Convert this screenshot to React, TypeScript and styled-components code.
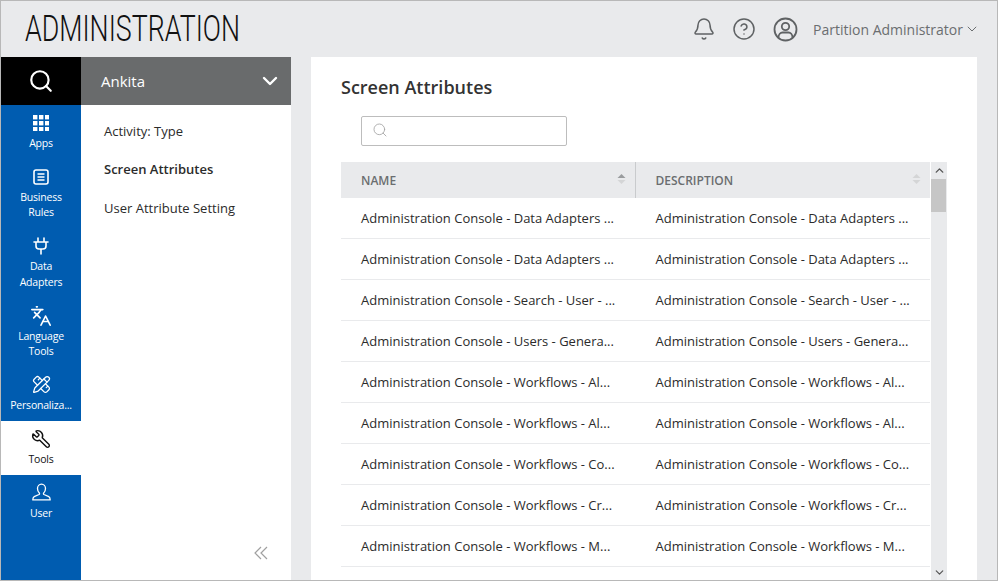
import React from "react";
import styled, { createGlobalStyle } from "styled-components";
import { Bell, ChevronDown, ChevronUp, CircleHelp, Languages, PencilRuler, Search, Wrench } from "lucide-react";

const Global = createGlobalStyle`
  html, body { margin: 0; padding: 0; height: 100%; overflow: hidden; }
  body { font-family: "Open Sans", "Liberation Sans", sans-serif; color: #2b2b2b; }
  #root { height: 100%; }
  * { box-sizing: border-box; }
`;

const Frame = styled.div`
  width: 998px; height: 581px; background: #e9eaec; border: 1px solid #b8b8b8;
  display: flex; flex-direction: column; overflow: hidden;
`;
const Header = styled.header`
  height: 56px; flex: none; display: flex; align-items: center; justify-content: space-between;
  padding: 0 20px 0 24px;
`;
const Title = styled.h1`
  margin: 0; font: 300 36px/56px Roboto, "Liberation Sans", sans-serif; color: #111; width: 214px;
  transform: scaleX(0.744); transform-origin: left center; white-space: nowrap;
`;
const HeaderTools = styled.div`
  display: flex; align-items: center; color: #5f6264; height: 56px;
`;
const ToolIcon = styled.span<{ $gap: number }>`
  display: flex; margin-right: ${p => p.$gap}px;
`;
const UserMenu = styled.div`
  display: flex; align-items: center; gap: 4px; font-size: 14px; color: #6b6e70;
`;
const Body = styled.div`
  flex: 1; display: flex; min-height: 0;
`;
const Rail = styled.nav`
  width: 80px; flex: none; background: #005cb0; display: flex; flex-direction: column;
`;
const RailSearch = styled.div`
  height: 48px; flex: none; background: #000; color: #fff; display: flex; align-items: center; justify-content: center;
`;
const RailItem = styled.div<{ $active?: boolean }>`
  display: flex; flex-direction: column; align-items: center; padding: 8px 4px 7.67px;
  background: ${p => (p.$active ? "#fff" : "transparent")};
  color: ${p => (p.$active ? "#111" : "#fff")};
`;
const RailIcon = styled.span`
  height: 20px; width: 24px; display: flex; align-items: center; justify-content: center; margin-bottom: 3px;
`;
const RailLabel = styled.span`
  font-size: 10.5px; line-height: 15.33px; text-align: center; letter-spacing: -0.2px; white-space: pre-line;
`;
const MirroredWrench = styled(Wrench)`
  transform: scaleX(-1);
`;
const SubPanel = styled.aside`
  width: 210px; flex: none; background: #fff; display: flex; flex-direction: column;
`;
const SubHeader = styled.div`
  height: 48px; flex: none; background: #696b6c; color: #fff; display: flex; align-items: center; justify-content: space-between;
  padding: 0 9px 0 20px; font-size: 15px;
`;
const SubList = styled.ul`
  list-style: none; margin: 0; padding: 6.8px 0 0 23px; flex: 1;
`;
const SubItem = styled.li<{ $active?: boolean }>`
  height: 38.4px; display: flex; align-items: center; font-size: 13px; color: #2b2b2b;
  font-weight: ${p => (p.$active ? 600 : 400)};
`;
const Collapse = styled.div`
  height: 56px; flex: none; display: flex; justify-content: flex-end; padding: 22px 23px 0 0; color: #a0a0a0;
`;
const Main = styled.main`
  flex: 1; background: #fff; margin: 0 20px; padding: 0 30px; min-width: 0; overflow: hidden;
`;
const PageTitle = styled.h2`
  margin: 0; padding-top: 17px; font-size: 18px; line-height: 26px; font-weight: 600; color: #333;
`;
const SearchBox = styled.div`
  width: 206px; height: 30px; margin: 16px 0 16px 20px; border: 1px solid #bdbdbd; border-radius: 2px;
  display: flex; align-items: center; padding-left: 10px; padding-bottom: 2px; color: #a5a5a5;
`;
const TableWrap = styled.div`
  display: flex; width: 606px;
`;
const TableBody = styled.div`
  width: 590px; flex: none; padding-right: 1px;
`;
const HeadRow = styled.div`
  display: flex; height: 36px; background: #e9eaec;
`;
const HeadCell = styled.div<{ $divider?: boolean }>`
  flex: none; display: flex; align-items: center; justify-content: space-between;
  font-size: 12px; font-weight: 600; color: #6b6e70;
  ${p => (p.$divider ? "width: 295px; padding: 0 9px 0 20px; border-right: 1px solid #c9cbcd;" : "width: 294px; padding: 0 9px 0 19.5px;")}
`;
const Sort = styled.svg`
  width: 9px; height: 12px; margin-top: -3px;
`;
const Row = styled.div`
  display: flex; height: 41px; border-bottom: 1px solid #e9eaec; align-items: center;
`;
const Cell = styled.div<{ $first?: boolean }>`
  flex: none; font-size: 13px; color: #2b2b2b; white-space: nowrap; margin-top: -1px;
  ${p => (p.$first ? "width: 295px; padding-left: 20px;" : "width: 294px; padding-left: 19.5px;")}
`;
const Scrollbar = styled.div`
  width: 16px; flex: none; background: #e9eaec; display: flex; flex-direction: column; align-items: center; height: 418px; color: #555;
`;
const ScrollBtn = styled.div<{ $end?: boolean }>`
  height: 17px; flex: none; display: flex; align-items: center; justify-content: center;
  ${p => (p.$end ? "padding-top: 2px;" : "")}
`;
const Thumb = styled.div`
  width: 15px; height: 33px; flex: none; background: #c6c6c6; margin-left: -0.5px;
`;
const Spacer = styled.div`
  flex: 1;
`;

const stroke = { fill: "none", stroke: "currentColor", strokeWidth: 1.6, strokeLinecap: "round" as const, strokeLinejoin: "round" as const };

const AppsIcon = () => (
  <svg width="16" height="16" viewBox="0 0 16 16" fill="currentColor">
    {[0, 6, 12].flatMap(y => [0, 6, 12].map(x => <rect key={`${x}-${y}`} x={x} y={y} width="4.4" height="4.4" />))}
  </svg>
);
const RulesIcon = () => (
  <svg width="16" height="16" viewBox="0 0 16 16" {...stroke}>
    <rect x="1" y="1" width="14" height="14" rx="2" />
    <path d="M4.5 5h7M4.5 8h7M4.5 11h7" strokeLinecap="butt" />
  </svg>
);
const PlugIcon = () => (
  <svg width="16" height="18" viewBox="0 0 16 18" {...stroke}>
    <path d="M5 1v4M11 1v4M1 5h14M3 5v4q0 3 3 3h4q3 0 3-3V5M8 12v5" />
  </svg>
);
const PersonIcon = () => (
  <svg width="19" height="19" viewBox="0 0 19 19" {...stroke} strokeWidth={1.3}>
    <path d="M5.500 5.500a4 4.400 0 0 1 8 0c0 2.400-1 3.700-1.800 4.400-.4.500-.3 1.300.3 1.600l4.800 2.100c1 .5 1.400 1.200 1.400 3.300H.8c0-2.100.4-2.800 1.400-3.300l4.800-2.100c.6-.3.7-1.100.3-1.600-.8-.7-1.800-2-1.800-4.400z" />
  </svg>
);
const AccountIcon = () => (
  <svg width="25" height="25" viewBox="0 0 25 25" {...stroke} strokeWidth={1.8}>
    <circle cx="12.5" cy="12.5" r="11" />
    <circle cx="12.5" cy="9.5" r="3.7" />
    <path d="M5.5 20.500c0-3 2-5 4-5h6c2 0 4 2 4 5" />
  </svg>
);
const ThinChevron = () => (
  <svg width="10" height="6" viewBox="0 0 10 6" fill="none" stroke="currentColor" strokeWidth="1">
    <path d="M.8.8 5 5l4.200-4.200" />
  </svg>
);
const DoubleChevron = () => (
  <svg width="14" height="14" viewBox="0 0 14 14" fill="none" stroke="currentColor" strokeWidth="1.2">
    <path d="M7 1 1 7l6 6M13 1 7 7l6 6" />
  </svg>
);

const prefix = "Administration Console - ";
const names = [
  "Data Adapters ...",
  "Data Adapters ...",
  "Search - User - ...",
  "Users - Genera...",
  "Workflows - Al...",
  "Workflows - Al...",
  "Workflows - Co...",
  "Workflows - Cr...",
  "Workflows - M...",
];

const rail = [
  { label: "Apps", icon: <AppsIcon /> },
  { label: "Business\nRules", icon: <RulesIcon /> },
  { label: "Data\nAdapters", icon: <PlugIcon /> },
  { label: "Language\nTools", icon: <Languages size={22} strokeWidth={1.8} /> },
  { label: "Personaliza...", icon: <PencilRuler size={19} strokeWidth={1.6} /> },
  { label: "Tools", icon: <MirroredWrench size={20} strokeWidth={1.7} />, active: true },
  { label: "User", icon: <PersonIcon /> },
];

export default function App() {
  return (
    <Frame>
      <Global />
      <Header>
        <Title>ADMINISTRATION</Title>
        <HeaderTools>
          <ToolIcon $gap={16}><Bell size={24} strokeWidth={1.5} /></ToolIcon>
          <ToolIcon $gap={17}><CircleHelp size={24} strokeWidth={1.5} /></ToolIcon>
          <ToolIcon $gap={15}><AccountIcon /></ToolIcon>
          <UserMenu>Partition Administrator<ThinChevron /></UserMenu>
        </HeaderTools>
      </Header>
      <Body>
        <Rail>
          <RailSearch><Search size={26} strokeWidth={2} /></RailSearch>
          {rail.map(item => (
            <RailItem key={item.label} $active={item.active}>
              <RailIcon>{item.icon}</RailIcon>
              <RailLabel>{item.label}</RailLabel>
            </RailItem>
          ))}
        </Rail>
        <SubPanel>
          <SubHeader>Ankita<ChevronDown size={24} strokeWidth={2.4} /></SubHeader>
          <SubList>
            <SubItem>Activity: Type</SubItem>
            <SubItem $active>Screen Attributes</SubItem>
            <SubItem>User Attribute Setting</SubItem>
          </SubList>
          <Collapse><DoubleChevron /></Collapse>
        </SubPanel>
        <Main>
          <PageTitle>Screen Attributes</PageTitle>
          <SearchBox><Search size={16} strokeWidth={1.3} /></SearchBox>
          <TableWrap>
            <TableBody>
              <HeadRow>
                <HeadCell $divider>NAME
                  <Sort viewBox="0 0 9 12"><path d="M4.5 1 8.5 5H.5z" fill="#9a9c9e" /><path d="M4.5 11 8.5 7H.5z" fill="#d4d5d6" /></Sort>
                </HeadCell>
                <HeadCell>DESCRIPTION
                  <Sort viewBox="0 0 9 12"><path d="M4.5 1 8.5 5H.5z" fill="#d4d5d6" /><path d="M4.5 11 8.5 7H.5z" fill="#d4d5d6" /></Sort>
                </HeadCell>
              </HeadRow>
              {names.map((n, i) => (
                <Row key={i}>
                  <Cell $first>{prefix + n}</Cell>
                  <Cell>{prefix + n}</Cell>
                </Row>
              ))}
            </TableBody>
            <Scrollbar>
              <ScrollBtn><ChevronUp size={13} strokeWidth={2.6} /></ScrollBtn>
              <Thumb />
              <Spacer />
              <ScrollBtn $end><ChevronDown size={13} strokeWidth={2.2} /></ScrollBtn>
            </Scrollbar>
          </TableWrap>
        </Main>
      </Body>
    </Frame>
  );
}
